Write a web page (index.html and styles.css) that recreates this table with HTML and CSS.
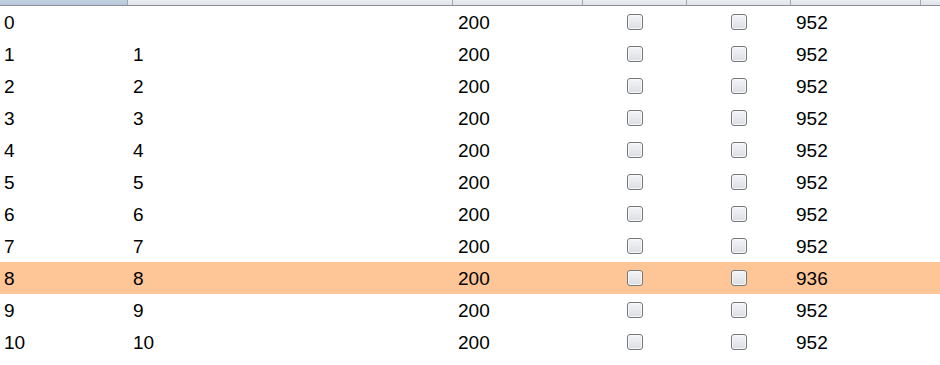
FILE: index.html
```html
<!DOCTYPE html>
<html>
<head>
<meta charset="utf-8">
<link rel="stylesheet" href="styles.css">
</head>
<body>
<div class="table">
  <div class="row header">
    <div class="hcell sel"></div><div class="hcell"></div><div class="hcell"></div><div class="hcell"></div><div class="hcell"></div><div class="hcell"></div><div class="hcell"></div>
  </div>
  <div class="row"><div class="cell first">0</div><div class="cell"></div><div class="cell">200</div><div class="cell cb"><span class="box"></span></div><div class="cell cb"><span class="box"></span></div><div class="cell">952</div><div class="cell"></div></div>
  <div class="row"><div class="cell first">1</div><div class="cell">1</div><div class="cell">200</div><div class="cell cb"><span class="box"></span></div><div class="cell cb"><span class="box"></span></div><div class="cell">952</div><div class="cell"></div></div>
  <div class="row"><div class="cell first">2</div><div class="cell">2</div><div class="cell">200</div><div class="cell cb"><span class="box"></span></div><div class="cell cb"><span class="box"></span></div><div class="cell">952</div><div class="cell"></div></div>
  <div class="row"><div class="cell first">3</div><div class="cell">3</div><div class="cell">200</div><div class="cell cb"><span class="box"></span></div><div class="cell cb"><span class="box"></span></div><div class="cell">952</div><div class="cell"></div></div>
  <div class="row"><div class="cell first">4</div><div class="cell">4</div><div class="cell">200</div><div class="cell cb"><span class="box"></span></div><div class="cell cb"><span class="box"></span></div><div class="cell">952</div><div class="cell"></div></div>
  <div class="row"><div class="cell first">5</div><div class="cell">5</div><div class="cell">200</div><div class="cell cb"><span class="box"></span></div><div class="cell cb"><span class="box"></span></div><div class="cell">952</div><div class="cell"></div></div>
  <div class="row"><div class="cell first">6</div><div class="cell">6</div><div class="cell">200</div><div class="cell cb"><span class="box"></span></div><div class="cell cb"><span class="box"></span></div><div class="cell">952</div><div class="cell"></div></div>
  <div class="row"><div class="cell first">7</div><div class="cell">7</div><div class="cell">200</div><div class="cell cb"><span class="box"></span></div><div class="cell cb"><span class="box"></span></div><div class="cell">952</div><div class="cell"></div></div>
  <div class="row hl"><div class="cell first">8</div><div class="cell">8</div><div class="cell">200</div><div class="cell cb"><span class="box"></span></div><div class="cell cb"><span class="box"></span></div><div class="cell">936</div><div class="cell"></div></div>
  <div class="row"><div class="cell first">9</div><div class="cell">9</div><div class="cell">200</div><div class="cell cb"><span class="box"></span></div><div class="cell cb"><span class="box"></span></div><div class="cell">952</div><div class="cell"></div></div>
  <div class="row"><div class="cell first">10</div><div class="cell">10</div><div class="cell">200</div><div class="cell cb"><span class="box"></span></div><div class="cell cb"><span class="box"></span></div><div class="cell">952</div><div class="cell"></div></div>
</div>
</body>
</html>
```
FILE: styles.css
```css
html, body {
  margin: 0;
  padding: 0;
  background: #ffffff;
}
.table {
  width: 940px;
  font-family: "Liberation Sans", Arial, sans-serif;
  font-size: 19px;
  color: #000;
}
.row {
  display: grid;
  grid-template-columns: 127px 325px 130px 104px 104px 130px 1fr;
  height: 32px;
}
.row.header {
  height: 5px;
  border-bottom: 1px solid #8d8f94;
}
.hcell {
  background: linear-gradient(#eceef4, #dfe2ea);
  border-left: 1px solid #a3a6ad;
}
.hcell.sel {
  background: linear-gradient(#c3d3e2, #b5c8da);
  border-left: none;
}
.row.hl {
  background: #fec597;
}
.cell {
  display: flex;
  align-items: center;
  padding-left: 6px;
  line-height: 1;
}
.cell.first {
  padding-left: 4px;
}
.cell.cb {
  justify-content: center;
  padding-left: 1px;
}
.box {
  display: block;
  box-sizing: border-box;
  width: 16px;
  height: 16px;
  border: 1px solid #74777c;
  border-radius: 3px;
  background: linear-gradient(#f3f4f6, #dcdee3);
  box-shadow: inset 0 0 0 1px #f7f8fa;
}
```
